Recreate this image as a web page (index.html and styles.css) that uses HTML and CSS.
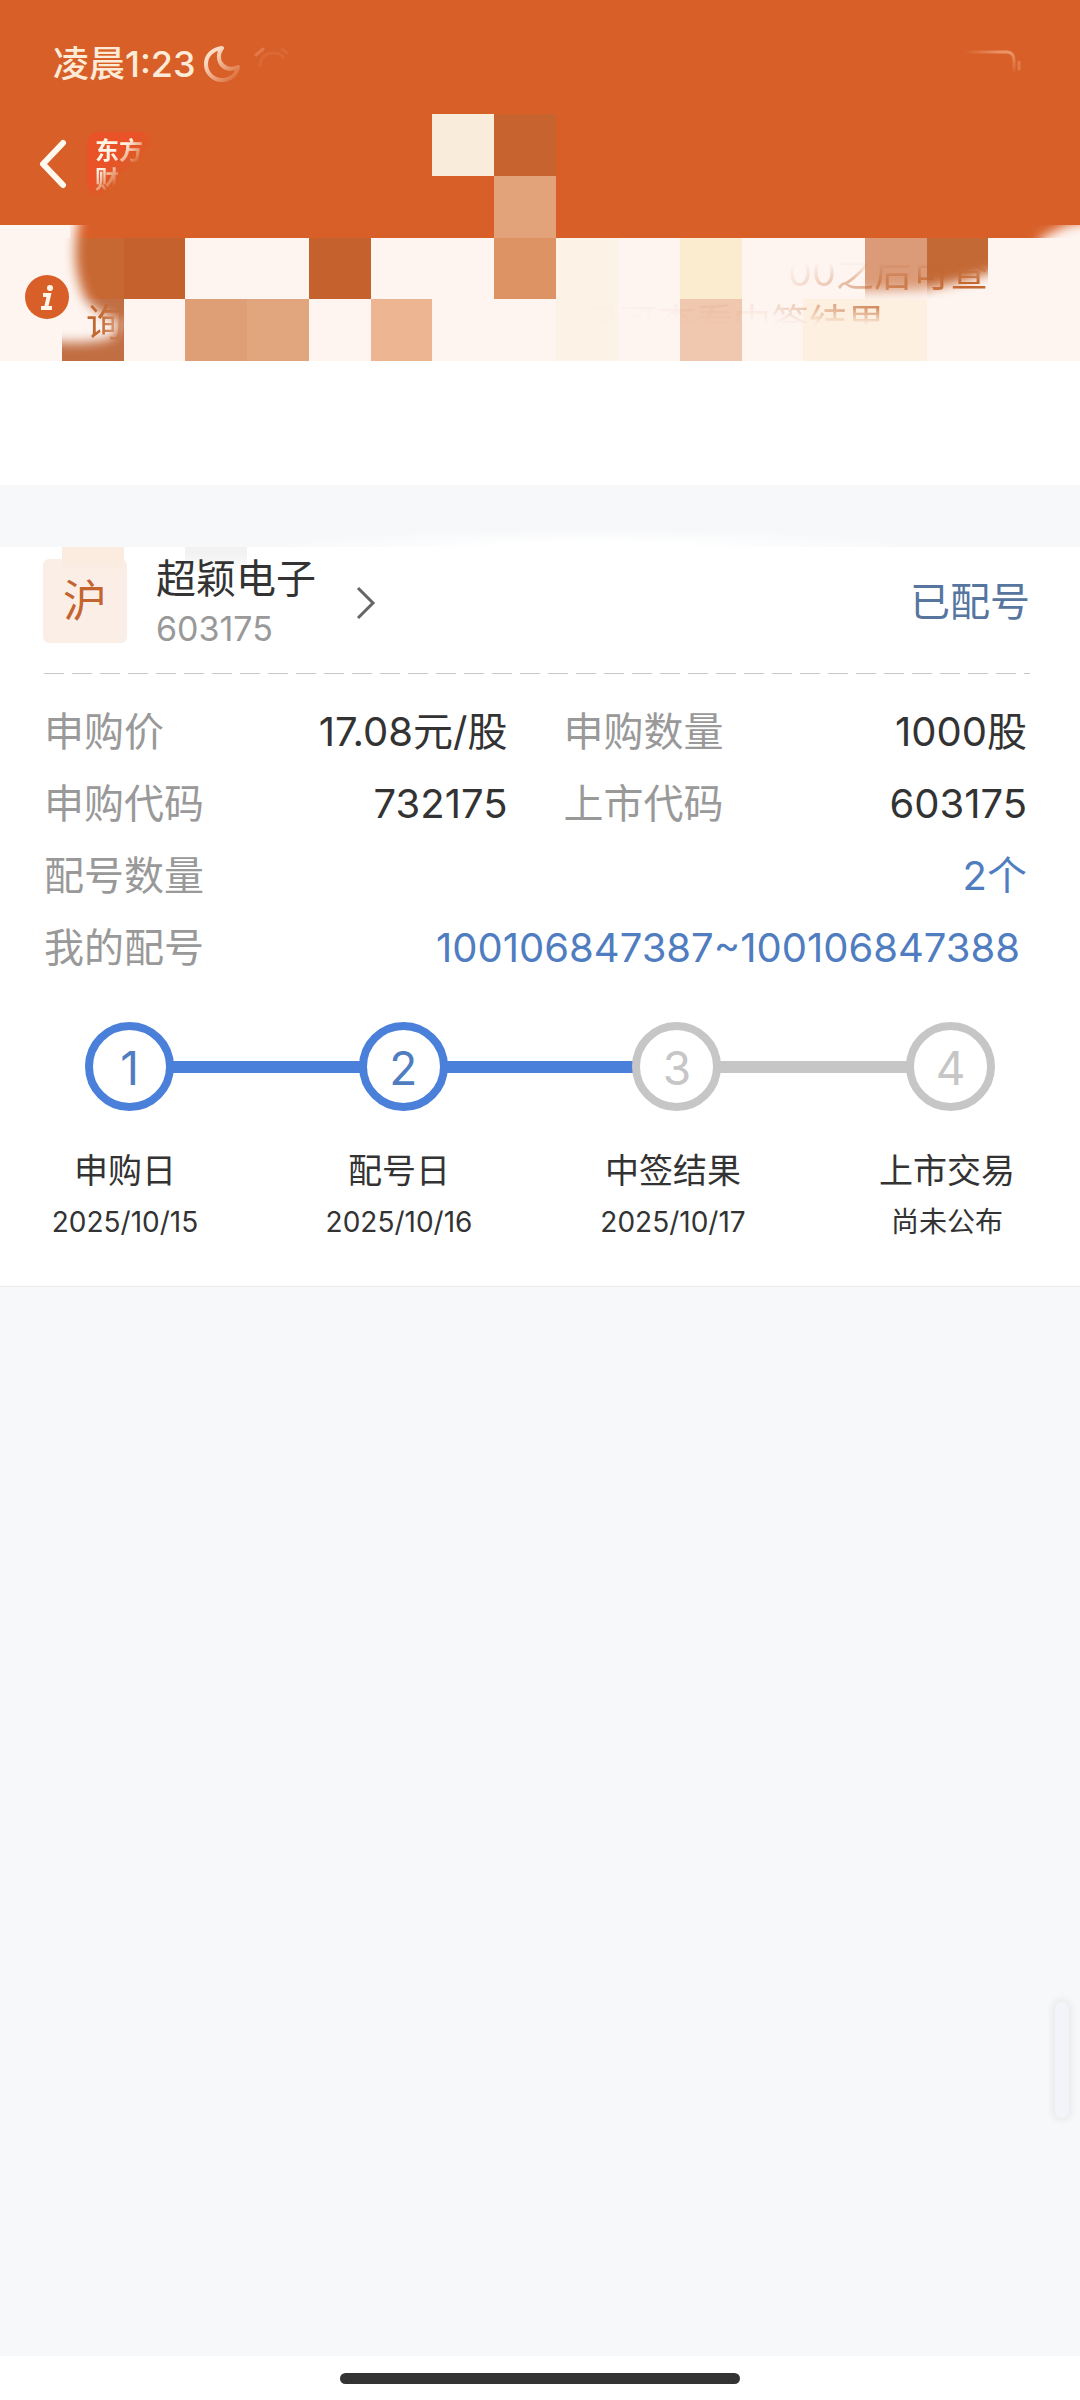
FILE: index.html
```html
<!DOCTYPE html>
<html lang="zh-CN">
  <head>
    <meta charset="utf-8" />
    <meta name="viewport" content="width=device-width, initial-scale=1.0" />
    <title>我的配号</title>
    <link rel="stylesheet" href="styles.css">
  </head>
  <body>
    <div class="top">
      <header class="header">
        <div class="statusbar">
          <span class="time">凌晨1:23</span>
          <svg class="moon" width="36" height="36" viewBox="0 0 36 36">
            <defs>
              <linearGradient id="moonFade" x1="0" y1="0" x2="1" y2="1">
                <stop offset="0.2" stop-color="#fbdcc4" />
                <stop offset="0.9" stop-color="#de7440" />
              </linearGradient>
            </defs>
            <path d="M18 2C8 3 2 10 2 18c0 9 7 16 16 16 8 0 15-5 16-13-8 4-15 1-18-5-2-5-1-10 2-14z" fill="none" stroke="url(#moonFade)" stroke-width="4" stroke-linejoin="round" />
          </svg>
          <svg class="alarm" width="36" height="36" viewBox="0 0 36 36" fill="none" stroke="#e2794a" stroke-width="3" stroke-linecap="round">
            <path d="M2 9l7-6" />
            <path d="M28 3l5 4M6 20C6 11 12 7 18 7s9 1 11 4" opacity="0.4" />
          </svg>
          <svg class="battery" width="64" height="30" viewBox="0 0 64 30" fill="none" stroke-width="3">
            <defs>
              <linearGradient id="batteryFade" x1="0" y1="0" x2="1" y2="0">
                <stop offset="0.1" stop-color="#d85f28" />
                <stop offset="0.9" stop-color="#ea9468" />
              </linearGradient>
              <linearGradient id="batteryDrop" x1="0" y1="0" x2="0" y2="1">
                <stop offset="0" stop-color="#ea9468" />
                <stop offset="1" stop-color="#d85f28" />
              </linearGradient>
            </defs>
            <path d="M2 3h46v1" stroke="url(#batteryFade)" />
            <path d="M48 3q8 0 8 8v14" stroke="url(#batteryDrop)" />
            <path d="M61 13v7" stroke="#e07c4c" stroke-linecap="round" />
          </svg>
        </div>
        <div class="navbar">
          <button class="back" aria-label="返回">
            <svg width="28" height="50" viewBox="0 0 28 50">
              <path d="M24 4L4 25l20 21" fill="none" stroke="#fff8ee" stroke-width="6" stroke-linecap="round" stroke-linejoin="round" />
            </svg>
          </button>
          <div class="logo">东方<br>财</div>
        </div>
      </header>
      <!-- coloured tiles over header and notice -->
      <svg class="tiles" viewBox="0 0 1080 361" preserveAspectRatio="none" aria-hidden="true">
        <defs>
          <filter id="soft" x="-50%" y="-50%" width="200%" height="200%"><feGaussianBlur stdDeviation="6" /></filter>
          <clipPath id="edge"><path d="M0 225h100v13h24v123H62V238H0zM1000 225h80v13h-80z" /></clipPath>
          <clipPath id="tail"><rect x="865" y="238" width="123" height="61" /></clipPath>
        </defs>
        <path d="M0 225h1080v13H0z" fill="#d85f28" />
        <path d="M432 114h62v62h-62z" fill="#f9ecdb" />
        <path d="M494 114h62v62h-62z" fill="#c7632f" />
        <path d="M494 176h62v62h-62z" fill="#e2a27a" />
        <path d="M62 238h62v61H62z" fill="#c76732" />
        <path d="M124 238h61v61h-61zM309 238h62v61h-62z" fill="#c4612d" />
        <path d="M494 238h62v61h-62z" fill="#de9365" />
        <path d="M556 238h62v123h-62z" fill="#fcf2e6" />
        <path d="M680 238h62v61h-62z" fill="#fbecd0" />
        <path d="M865 238h62v61h-62z" fill="#db9b78" />
        <path d="M927 238h61v61h-61z" fill="#c36935" />
        <path d="M62 299h62v62H62z" fill="#c16e43" />
        <path d="M185 299h62v62h-62z" fill="#de9f76" />
        <path d="M247 299h62v62h-62z" fill="#e1a67e" />
        <path d="M371 299h61v62h-61z" fill="#eeb592" />
        <path d="M680 299h62v62h-62z" fill="#f0c8af" />
        <path d="M803 299h124v62H803z" fill="#fdf0e1" />
        <g clip-path="url(#edge)">
          <path d="M-20 200H84Q66 260 86 300Q96 312 122 322L112 338Q80 346 40 340H-20zM1040 238Q1050 234 1064 226L1110 215V260H1040z" fill="#fef5f1" filter="url(#soft)" />
          <path d="M0 225h70v13H0z" fill="#fef5f1" />
        </g>
        <g clip-path="url(#tail)">
          <path d="M850 292L920 290L950 284L1000 270V320H850z" fill="#fef5f1" filter="url(#soft)" />
        </g>
      </svg>
      <div class="notice">
        <svg class="info" width="44" height="44" viewBox="0 0 44 44">
          <circle cx="22" cy="22" r="22" fill="#d85f28" />
          <circle cx="25" cy="13" r="3" fill="#fff5e8" />
          <path d="M18 20h6l-3 13M16 33h11" fill="none" stroke="#fff5e8" stroke-width="4" />
        </svg>
        <p class="notice-text">
          <span class="line-end">00之后可查</span>
          <span class="line-next"><span class="lead">询</span><span class="faint">日可查看中签结果</span></span>
        </p>
      </div>
    </div>
    <div class="blank"></div>

    <main class="card">
      <div class="stock">
        <span class="market">沪</span>
        <a class="stock-link" href="#">
          <span class="stock-name">
            <strong>超颖电子</strong>
            <small>603175</small>
          </span>
          <svg width="20" height="34" viewBox="0 0 20 34">
            <path d="M2 2l15 15L2 32" fill="none" stroke="#666" stroke-width="3" />
          </svg>
        </a>
        <span class="state">已配号</span>
      </div>
      <dl class="details">
        <div><dt>申购价</dt><dd>17.08元/股</dd></div>
        <div><dt>申购数量</dt><dd>1000股</dd></div>
        <div><dt>申购代码</dt><dd>732175</dd></div>
        <div><dt>上市代码</dt><dd>603175</dd></div>
        <div class="wide"><dt>配号数量</dt><dd class="blue">2个</dd></div>
        <div class="wide"><dt>我的配号</dt><dd class="blue numbers">100106847387~100106847388</dd></div>
      </dl>
      <div class="track">
        <span class="dot done">1</span>
        <span class="bar done"></span>
        <span class="dot done">2</span>
        <span class="bar done"></span>
        <span class="dot">3</span>
        <span class="bar"></span>
        <span class="dot">4</span>
      </div>
      <ol class="steps">
        <li>申购日<small>2025/10/15</small></li>
        <li>配号日<small>2025/10/16</small></li>
        <li>中签结果<small>2025/10/17</small></li>
        <li>上市交易<small>尚未公布</small></li>
      </ol>
    </main>

    <div class="side-handle"></div>
    <footer class="homebar"><span></span></footer>
  </body>
</html>
```

FILE: styles.css
```css
* {
  box-sizing: border-box;
}
body {
  margin: 0;
  min-height: 100vh;
  display: flex;
  flex-direction: column;
  position: relative;
  background: #f6f8fa;
  color: #333;
  font: 40px/48px Inter, 'Noto Sans CJK SC', sans-serif;
}
button {
  padding: 0;
  border: none;
  background: none;
  cursor: pointer;
}
svg {
  display: block;
  flex: none;
}
a {
  color: inherit;
  text-decoration: none;
}
.top {
  position: relative;
}
.header {
  height: 225px;
  background: #d85f28;
}
.statusbar {
  display: flex;
  align-items: center;
  padding: 40px 58px 0 53px;
  color: #fdebd7;
  font-size: 36px;
  font-weight: 500;
}
.moon {
  margin-left: 8px;
}
.alarm {
  margin-left: 14px;
}
.battery {
  margin-left: auto;
}
.navbar {
  display: flex;
  align-items: center;
  gap: 20px;
  padding: 44px 39px 0;
}
.logo {
  width: 64px;
  height: 64px;
  padding: 4px 8px;
  border-radius: 12px;
  background: #ea5228;
  color: #fff3e6;
  font-size: 24px;
  font-weight: 700;
  line-height: 29px;
  -webkit-mask-image: linear-gradient(135deg, #000 40%, transparent 64%);
  mask-image: linear-gradient(135deg, #000 40%, transparent 64%);
}
.tiles {
  position: absolute;
  top: 0;
  left: 0;
  width: 100%;
  height: 100%;
}
.notice {
  display: flex;
  align-items: center;
  gap: 17px;
  height: 136px;
  padding: 8px 92px 0 25px;
  background: #fef5f1;
  color: #c46832;
  font-size: 38px;
  line-height: 50px;
}
.info,
.notice-text {
  position: relative;
}
.notice-text {
  flex: 1;
  margin: 0;
}
.line-end {
  display: block;
  text-align: right;
  -webkit-mask-image: linear-gradient(transparent 30%, #000 70%), linear-gradient(90deg, transparent 76%, #000 97%);
  mask-image: linear-gradient(transparent 30%, #000 70%), linear-gradient(90deg, transparent 76%, #000 97%);
  mask-composite: intersect;
}
.line-next {
  display: flex;
  justify-content: space-between;
  padding-right: 103px;
}
.lead {
  -webkit-mask-image: linear-gradient(90deg, #000 40%, rgba(0, 0, 0, 0.2));
  mask-image: linear-gradient(90deg, #000 40%, rgba(0, 0, 0, 0.2));
}
.faint {
  -webkit-mask-image: linear-gradient(#000 20%, transparent 56%), linear-gradient(90deg, transparent, rgba(0, 0, 0, 0.1) 60%, rgba(0, 0, 0, 0.8));
  mask-image: linear-gradient(#000 20%, transparent 56%), linear-gradient(90deg, transparent, rgba(0, 0, 0, 0.1) 60%, rgba(0, 0, 0, 0.8));
  mask-composite: intersect;
}
.blank {
  height: 124px;
  background: #fff;
}
.card {
  position: relative;
  margin-top: 62px;
  padding-bottom: 40px;
  background: #fff;
  border-bottom: 1px solid #ebebeb;
}
/* soft highlight above the card */
.card::before {
  content: '';
  position: absolute;
  left: 25%;
  right: 15%;
  bottom: 100%;
  height: 18px;
  background: radial-gradient(ellipse at bottom, #fff 20%, transparent 70%);
}
.stock {
  display: flex;
  align-items: center;
  margin: 0 50px 0 43px;
  height: 126px;
  padding-bottom: 18px;
}
.market {
  width: 84px;
  height: 84px;
  border-radius: 6px;
  background: #faeee7;
  color: #c4642f;
  font-size: 44px;
  line-height: 84px;
  text-align: center;
}
.market::before,
.stock::before {
  content: '';
  position: absolute;
  top: 0;
  left: 62px;
  width: 62px;
  height: 30px;
  background: linear-gradient(#fcecdf 40%, transparent);
}
.stock::before {
  left: 185px;
  background: linear-gradient(#f2f2f2 20%, transparent);
}
.stock-link {
  position: relative;
  display: flex;
  align-items: center;
  gap: 40px;
  margin-left: 29px;
  padding-top: 4px;
}
.stock-name strong {
  display: block;
  font-weight: 400;
  line-height: 52px;
}
.stock-name small {
  display: block;
  color: #999;
  font-size: 34px;
}
.state {
  margin-left: auto;
  padding-top: 2px;
  color: #56759f;
}
.details {
  display: grid;
  grid-template-columns: 1fr 1fr;
  gap: 24px 56px;
  margin: 0 53px 0 44px;
  padding-top: 35px;
  position: relative;
}
.details::before {
  content: '';
  position: absolute;
  top: 0;
  left: 0;
  right: -3px;
  height: 1px;
  background: repeating-linear-gradient(90deg, #c8c8c8 0 20px, transparent 20px 28px);
}
.details div {
  display: flex;
  justify-content: space-between;
}
.details dt {
  color: #999;
}
.details dd {
  margin: 0;
}
.details .wide {
  grid-column: span 2;
}
.details .blue {
  color: #4f7dc0;
}
.details .numbers {
  padding-right: 7px;
}
.track {
  display: flex;
  align-items: center;
  padding: 50px 85px 0;
}
.dot {
  width: 89px;
  height: 89px;
  border: 8px solid #c6c6c6;
  border-radius: 50%;
  color: #c6c6c6;
  font-size: 46px;
  line-height: 76px;
  text-align: center;
}
.dot.done {
  border-color: #4a80d9;
  color: #4f7dc0;
}
.bar {
  flex: 1;
  height: 12px;
  margin: 0 -2px;
  background: #c6c6c6;
}
.bar.done {
  background: #4a80d9;
}
.steps {
  display: flex;
  justify-content: space-between;
  margin: 0;
  padding: 36px 48px 0 40px;
  list-style: none;
}
.steps li {
  width: 170px;
  font-size: 34px;
  text-align: center;
}
.steps small {
  display: block;
  padding-top: 3px;
  font-size: 28px;
  white-space: nowrap;
}
.side-handle {
  position: absolute;
  top: 2002px;
  right: 11px;
  width: 14px;
  height: 116px;
  border-radius: 7px;
  background: #f2f4fa;
  box-shadow: 0 0 6px 3px #e9eaec;
}
.homebar {
  height: 44px;
  margin-top: auto;
  padding-top: 17px;
  background: #fff;
}
.homebar span {
  display: block;
  width: 37%;
  height: 11px;
  margin: 0 auto;
  border-radius: 6px;
  background: #333;
}
```
